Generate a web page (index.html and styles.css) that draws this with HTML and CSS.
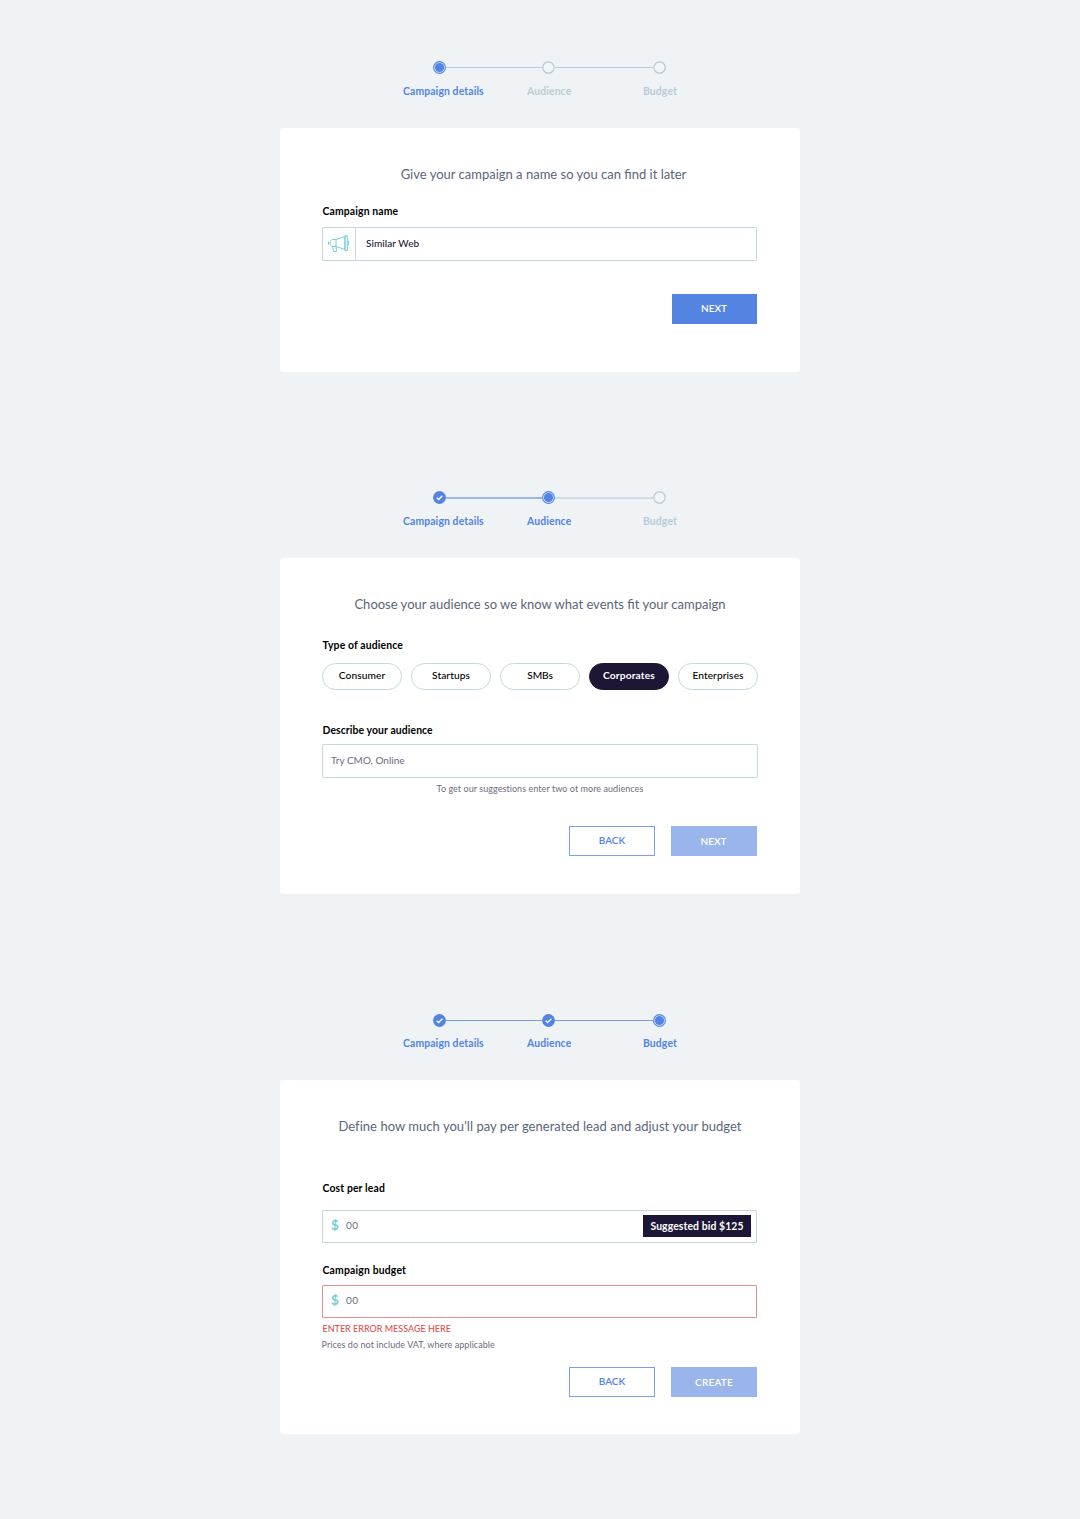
FILE: index.html
```html
<!DOCTYPE html>
<html lang="en">
<head>
<meta charset="utf-8">
<title>Create campaign</title>
<link rel="stylesheet" href="styles.css">
</head>
<body>
<svg class="defs" width="0" height="0" aria-hidden="true">
  <symbol id="todo" viewBox="0 0 13 13"><circle cx="6.5" cy="6.5" r="5.7" fill="#f1f5f8" stroke="#b4cad4" stroke-width="1.2"/></symbol>
  <symbol id="current" viewBox="0 0 13 13"><circle cx="6.5" cy="6.5" r="5.9" fill="#dce7fa" stroke="#5384e1" stroke-width="1.1"/><circle cx="6.5" cy="6.5" r="4.6" fill="#5384e1"/></symbol>
  <symbol id="done" viewBox="0 0 13 13"><circle cx="6.5" cy="6.5" r="6.4" fill="#5384e1"/><path d="M3.7 6.7 5.6 8.5 9.4 4.8" fill="none" stroke="#fff" stroke-width="1.3"/></symbol>
</svg>
<main class="page">
  <section class="wizard">
    <div class="stepper">
      <div class="track">
        <svg class="dot"><use href="#current"/></svg><span class="line"></span>
        <svg class="dot"><use href="#todo"/></svg><span class="line last"></span>
        <svg class="dot"><use href="#todo"/></svg>
      </div>
      <div class="steps"><span class="step on">Campaign details</span><span class="step">Audience</span><span class="step">Budget</span></div>
    </div>
    <div class="card card-details">
      <h2 class="title t1">Give your campaign a name so you can find it later</h2>
      <label class="label l1">Campaign name</label>
      <div class="field">
        <span class="addon"><svg class="horn" viewBox="0 0 22 18" fill="none" stroke="#74d0d3" stroke-width="1"><path d="M8 4.5H4.7C3 4.5 2 6 2 8s1 3.5 2.7 3.5H8zM.5 6.5v3M8 4.5 17 1.5v13L8 11.5M17 .7h2.300v14.800H17zM19.300 6.300h1.400v3.400h-1.400M4.700 11.700l.8 4.800h3l-.5-4.800"/></svg></span>
        <span class="value">Similar Web</span>
      </div>
      <div class="actions"><button class="btn solid">NEXT</button></div>
    </div>
  </section>

  <section class="wizard">
    <div class="stepper">
      <div class="track">
        <svg class="dot"><use href="#done"/></svg><span class="line thick on"></span>
        <svg class="dot"><use href="#current"/></svg><span class="line last thick"></span>
        <svg class="dot"><use href="#todo"/></svg>
      </div>
      <div class="steps"><span class="step on">Campaign details</span><span class="step on">Audience</span><span class="step">Budget</span></div>
    </div>
    <div class="card card-audience">
      <h2 class="title">Choose your audience so we know what events fit your campaign</h2>
      <label class="label l2">Type of audience</label>
      <div class="pills">
        <span class="pill">Consumer</span><span class="pill">Startups</span><span class="pill tight">SMBs</span><span class="pill chosen">Corporates</span><span class="pill">Enterprises</span>
      </div>
      <label class="label l3">Describe your audience</label>
      <div class="field wide"><span class="placeholder">Try CMO, Online</span></div>
      <p class="hint center">To get our suggestions enter two ot more audiences</p>
      <div class="actions"><button class="btn outline">BACK</button><button class="btn muted">NEXT</button></div>
    </div>
  </section>

  <section class="wizard">
    <div class="stepper">
      <div class="track">
        <svg class="dot"><use href="#done"/></svg><span class="line on"></span>
        <svg class="dot"><use href="#done"/></svg><span class="line last on"></span>
        <svg class="dot"><use href="#current"/></svg>
      </div>
      <div class="steps"><span class="step on">Campaign details</span><span class="step on">Audience</span><span class="step on">Budget</span></div>
    </div>
    <div class="card card-budget">
      <h2 class="title t3">Define how much you'll pay per generated lead and adjust your budget</h2>
      <label class="label l4">Cost per lead</label>
      <div class="field cost"><span class="currency">$</span><span class="placeholder amount">00</span><span class="bid">Suggested bid $125</span></div>
      <label class="label l5">Campaign budget</label>
      <div class="field invalid"><span class="currency">$</span><span class="placeholder amount">00</span></div>
      <p class="error">ENTER ERROR MESSAGE HERE</p>
      <p class="hint vat">Prices do not include VAT, where applicable</p>
      <div class="actions"><button class="btn outline">BACK</button><button class="btn muted create">CREATE</button></div>
    </div>
  </section>
</main>
</body>
</html>
```

FILE: styles.css
```css
* { box-sizing: border-box; }

body {
  margin: 0;
  background: #eff3f6;
  color: #000;
  font-family: Lato, "Liberation Sans", sans-serif;
  font-size: 10px;
  line-height: 12px;
}

.defs { position: absolute; }

.page {
  display: flex;
  flex-direction: column;
  align-items: center;
  height: 1519px;
  padding-top: 61px;
}

.wizard { width: 520px; }
.wizard + .wizard { margin-top: 119px; }
.wizard:nth-of-type(3) { margin-top: 120px; }

.stepper { height: 67px; padding-left: 123px; }
.wizard:nth-of-type(3) .stepper { height: 66px; }

.track { display: flex; align-items: center; width: 263px; padding-left: 30px; }
.dot { flex: none; width: 13px; height: 13px; }
.line { flex: none; width: 96px; height: 1px; background: #b7ccd6; }
.line.last { width: 98px; }
.line.on { background: #7b9fe8; }
.line.thick { height: 2px; background: #d0dde4; }
.line.thick.on { background: #9ab6ee; }

.steps { display: grid; grid-template-columns: 124px 116px 1fr; margin-top: 11px; }
.wizard:nth-of-type(3) .steps { margin-top: 10px; }
.step {
  color: #b7ccd6;
  font-size: 10.4px;
  font-weight: 700;
  letter-spacing: 0.12px;
  white-space: nowrap;
}
.step.on { color: #5384e1; }

.card {
  display: flex;
  flex-direction: column;
  padding: 37px 43px 0 42px;
  border-radius: 3px;
  background: #fff;
}
.card-details { height: 244px; }
.card-audience { height: 336px; padding-right: 42px; }
.card-budget { height: 354px; }

.title {
  margin: 0;
  color: #5b6579;
  font-size: 13px;
  font-weight: 400;
  line-height: 18px;
  text-align: center;
  white-space: nowrap;
}
.t1 { padding-left: 8px; }
.t3 { padding-left: 1px; letter-spacing: 0.035px; }

.label { padding-left: 0.5px; font-size: 10.4px; font-weight: 700; letter-spacing: 0.14px; }
.l1 { margin-top: 22px; }
.l2 { margin-top: 26px; }
.l3 { margin-top: 34px; letter-spacing: 0.1px; }
.l4 { margin-top: 47px; }
.l5 { margin-top: 21px; letter-spacing: 0.18px; }

.field {
  display: flex;
  align-items: center;
  height: 34px;
  margin-top: 10px;
  border: 1px solid #c6d7df;
  border-radius: 1px;
}
.field.wide { margin-top: 8px; }
.field.cost { height: 33px; margin-top: 16px; }
.field.invalid { height: 33px; margin-top: 9px; border-color: #e58c8c; }

.addon {
  display: flex;
  align-items: center;
  justify-content: center;
  width: 33px;
  height: 32px;
  border-right: 1px solid #c6d7df;
}
.horn { width: 22px; height: 18px; }
.value { margin-left: 10px; padding-bottom: 2px; color: #1d1635; font-weight: 500; letter-spacing: 0.06px; }
.placeholder { margin-left: 8px; padding-bottom: 2px; color: #6f6b7c; }
.currency {
  width: 8px;
  margin-left: 8px;
  padding-bottom: 3px;
  color: #74d0d3;
  font-size: 13.5px;
  font-weight: 700;
}
.placeholder.amount { margin-left: 7px; padding-bottom: 3px; letter-spacing: 0.4px; }

.bid {
  display: flex;
  align-items: center;
  justify-content: center;
  width: 108px;
  height: 22px;
  margin: 0 5px 1px auto;
  background: #1d1635;
  color: #fff;
  font-size: 10.4px;
  font-weight: 700;
  letter-spacing: 0.1px;
}

.pills { display: grid; grid-template-columns: repeat(5, 80px); gap: 9px; margin-top: 12px; }
.pill {
  height: 27px;
  border: 1px solid #c6d7df;
  border-radius: 14px;
  font-size: 10.2px;
  font-weight: 500;
  letter-spacing: 0.08px;
  line-height: 23px;
  text-align: center;
}
.pill.tight { letter-spacing: -0.1px; }
.pill.chosen { border-color: #1d1635; background: #1d1635; color: #fff; font-weight: 700; letter-spacing: 0.15px; }

.hint { margin: 5px 0 0; color: #6f6b7c; font-size: 9px; letter-spacing: 0.06px; }
.hint.center { text-align: center; }
.hint.vat { margin-top: 4px; margin-left: -0.5px; }
.error { margin: 5px 0 0; padding-left: 0.5px; color: #d9534f; font-size: 9px; font-weight: 500; }

.actions { display: flex; justify-content: flex-end; gap: 16px; margin-top: 33px; }
.btn {
  display: flex;
  align-items: center;
  justify-content: center;
  width: 86px;
  height: 30px;
  padding: 0 1px 0 0;
  border: 1px solid transparent;
  font: 600 10px/12px Lato, "Liberation Sans", sans-serif;
}
.btn.solid { width: 85px; padding-bottom: 2px; background: #5384e1; color: #fff; }
.btn.muted { background: #9ab4ec; color: #fff; }
.btn.outline { padding: 0 0 2px; border-color: #7b9fe8; background: #fff; color: #5384e1; }
.btn.create { padding: 0; letter-spacing: 0.2px; }
.card-audience .actions { margin-top: 31px; padding-right: 1px; }
.card-budget .actions { margin-top: 16px; }
```
